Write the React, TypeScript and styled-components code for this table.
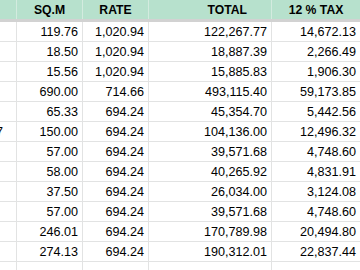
import React from "react"
import styled, { createGlobalStyle } from "styled-components"

const GlobalStyle = createGlobalStyle`
  html, body {
    margin: 0;
    padding: 0;
    background: #fff;
    overflow: hidden;
  }
  body {
    font-family: "Liberation Sans", Arial, sans-serif;
  }
`

type Row = {
  lead?: string
  sqm: string
  rate: string
  total: string
  tax: string
}

const rows: Row[] = [
  { sqm: "119.76", rate: "1,020.94", total: "122,267.77", tax: "14,672.13" },
  { sqm: "18.50", rate: "1,020.94", total: "18,887.39", tax: "2,266.49" },
  { sqm: "15.56", rate: "1,020.94", total: "15,885.83", tax: "1,906.30" },
  { sqm: "690.00", rate: "714.66", total: "493,115.40", tax: "59,173.85" },
  { sqm: "65.33", rate: "694.24", total: "45,354.70", tax: "5,442.56" },
  { lead: "7", sqm: "150.00", rate: "694.24", total: "104,136.00", tax: "12,496.32" },
  { sqm: "57.00", rate: "694.24", total: "39,571.68", tax: "4,748.60" },
  { sqm: "58.00", rate: "694.24", total: "40,265.92", tax: "4,831.91" },
  { sqm: "37.50", rate: "694.24", total: "26,034.00", tax: "3,124.08" },
  { sqm: "57.00", rate: "694.24", total: "39,571.68", tax: "4,748.60" },
  { sqm: "246.01", rate: "694.24", total: "170,789.98", tax: "20,494.80" },
  { sqm: "274.13", rate: "694.24", total: "190,312.01", tax: "22,837.44" },
  { sqm: "", rate: "", total: "", tax: "" },
]

export default function App() {
  return (
    <>
      <GlobalStyle />
      <S.Sheet>
        <S.HeaderRow>
          <S.HeadCell />
          <S.HeadCell>SQ.M</S.HeadCell>
          <S.HeadCell>RATE</S.HeadCell>
          <S.HeadCell $shift={24}>TOTAL</S.HeadCell>
          <S.HeadCell>12 % TAX</S.HeadCell>
        </S.HeaderRow>
        <S.FreezeBar />
        {rows.map((r, i) => (
          <S.DataRow key={i}>
            <S.LeadCell>{r.lead}</S.LeadCell>
            <S.Cell>{r.sqm}</S.Cell>
            <S.Cell>{r.rate}</S.Cell>
            <S.Cell>{r.total}</S.Cell>
            <S.Cell>{r.tax}</S.Cell>
          </S.DataRow>
        ))}
      </S.Sheet>
    </>
  )
}

const columns = "17px 66px 66px 123px 89px"

const S = {
  Sheet: styled.div`
    width: 360px;
    height: 270px;
    overflow: hidden;
    display: flex;
    flex-direction: column;
  `,
  HeaderRow: styled.div`
    display: grid;
    grid-template-columns: ${columns};
    height: 19px;
    background: #b7e1cd;
    flex-shrink: 0;
  `,
  HeadCell: styled.div<{ $shift?: number }>`
    display: flex;
    align-items: center;
    justify-content: ${(p) => (p.$shift ? "flex-end" : "center")};
    padding-right: ${(p) => (p.$shift ? `${p.$shift}px` : "0")};
    border-right: 1px solid #d3ebdf;
    font-size: 12.2px;
    font-weight: 700;
    color: #000;
    white-space: nowrap;
    overflow: hidden;
  `,
  FreezeBar: styled.div`
    height: 3px;
    background: #d2d2d2;
    flex-shrink: 0;
  `,
  DataRow: styled.div`
    display: grid;
    grid-template-columns: ${columns};
    height: 20px;
    flex-shrink: 0;
    box-sizing: border-box;
    border-bottom: 1px solid #e2e3e3;
  `,
  Cell: styled.div`
    display: flex;
    align-items: center;
    justify-content: flex-end;
    padding-right: 4px;
    border-right: 1px solid #e2e3e3;
    font-size: 12.6px;
    color: #000;
    white-space: nowrap;
    overflow: hidden;
  `,
  LeadCell: styled.div`
    display: flex;
    align-items: center;
    justify-content: flex-end;
    padding-right: 13px;
    border-right: 1px solid #e2e3e3;
    font-size: 12.6px;
    color: #000;
    white-space: nowrap;
    overflow: hidden;
  `,
}
